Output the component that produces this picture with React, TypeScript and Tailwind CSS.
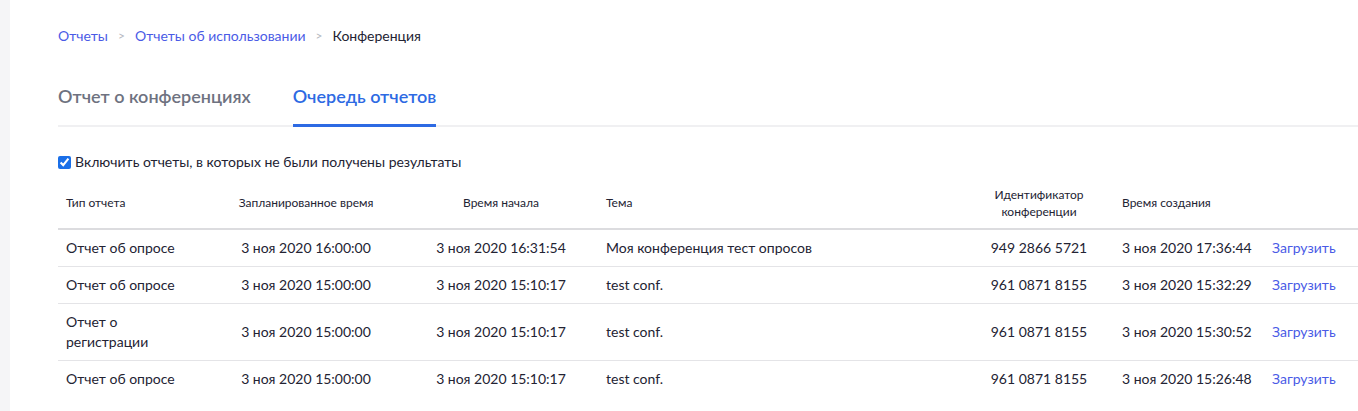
import { useState } from 'react';

interface ReportRow {
  type: string;
  scheduled: string;
  started: string;
  topic: string;
  meetingId: string;
  created: string;
}

const rows: ReportRow[] = [
  {
    type: 'Отчет об опросе',
    scheduled: '3 ноя 2020 16:00:00',
    started: '3 ноя 2020 16:31:54',
    topic: 'Моя конференция тест опросов',
    meetingId: '949 2866 5721',
    created: '3 ноя 2020 17:36:44',
  },
  {
    type: 'Отчет об опросе',
    scheduled: '3 ноя 2020 15:00:00',
    started: '3 ноя 2020 15:10:17',
    topic: 'test conf.',
    meetingId: '961 0871 8155',
    created: '3 ноя 2020 15:32:29',
  },
  {
    type: 'Отчет о регистрации',
    scheduled: '3 ноя 2020 15:00:00',
    started: '3 ноя 2020 15:10:17',
    topic: 'test conf.',
    meetingId: '961 0871 8155',
    created: '3 ноя 2020 15:30:52',
  },
  {
    type: 'Отчет об опросе',
    scheduled: '3 ноя 2020 15:00:00',
    started: '3 ноя 2020 15:10:17',
    topic: 'test conf.',
    meetingId: '961 0871 8155',
    created: '3 ноя 2020 15:26:48',
  },
];

export default function App() {
  const [activeTab, setActiveTab] = useState<'meetings' | 'queue'>('queue');
  const [includeEmpty, setIncludeEmpty] = useState(true);

  return (
    <div className="flex min-h-[411px] bg-white font-['Lato',sans-serif] text-[#232333]">
      <div className="w-[10px] shrink-0 bg-[#f5f5f7]" />

      <div className="flex-1 pl-[48px] pt-[26px] overflow-hidden">
        {/* breadcrumb */}
        <nav className="flex items-center text-[14px] leading-5">
          <a className="text-[#4a5be6]">Отчеты</a>
          <span className="mx-[10px] text-[#b5b8c0] text-[12px]">&gt;</span>
          <a className="text-[#4a5be6]">Отчеты об использовании</a>
          <span className="mx-[10px] text-[#b5b8c0] text-[12px]">&gt;</span>
          <span className="text-[#232333]">Конференция</span>
        </nav>

        {/* tabs */}
        <div className="mt-[38px] flex gap-[42px] border-b-2 border-[#f0f0f2]">
          <button
            onClick={() => setActiveTab('meetings')}
            className={`-mb-[2px] border-b-[3px] pb-[16px] text-[18px] leading-6 font-semibold ${
              activeTab === 'meetings' ? 'border-[#2d6ae3] text-[#2d6ae3]' : 'border-transparent text-[#6e7280]'
            }`}
          >
            Отчет о конференциях
          </button>
          <button
            onClick={() => setActiveTab('queue')}
            className={`-mb-[2px] border-b-[3px] pb-[16px] text-[18px] leading-6 font-semibold ${
              activeTab === 'queue' ? 'border-[#2d6ae3] text-[#2d6ae3]' : 'border-transparent text-[#6e7280]'
            }`}
          >
            Очередь отчетов
          </button>
        </div>

        {/* filter */}
        <label className="mt-[25px] flex items-center gap-[4px] text-[14px] leading-5 text-[#232333]">
          <input
            type="checkbox"
            checked={includeEmpty}
            onChange={(e) => setIncludeEmpty(e.target.checked)}
            className="m-0 h-[13px] w-[13px] accent-[#1a6fe8]"
          />
          Включить отчеты, в которых не были получены результаты
        </label>

        {/* table */}
        <table className="mt-[9px] w-[1300px] table-fixed border-collapse text-left">
          <colgroup>
            <col className="w-[126px]" />
            <col className="w-[244px]" />
            <col className="w-[146px]" />
            <col className="w-[390px]" />
            <col className="w-[150px]" />
            <col className="w-[150px]" />
            <col className="w-[94px]" />
          </colgroup>
          <thead>
            <tr className="text-[12px] leading-[17px] text-[#232333]">
              <th className="h-[48px] border-b-2 border-[#dcdcdf] px-2 pb-1 font-normal">Тип отчета</th>
              <th className="border-b-2 border-[#dcdcdf] px-2 pb-1 text-center font-normal">Запланированное время</th>
              <th className="border-b-2 border-[#dcdcdf] px-2 pb-1 text-center font-normal">Время начала</th>
              <th className="border-b-2 border-[#dcdcdf] pl-8 pb-1 font-normal">Тема</th>
              <th className="border-b-2 border-[#dcdcdf] px-2 pb-1 text-center font-normal">
                Идентификатор
                <br />
                конференции
              </th>
              <th className="border-b-2 border-[#dcdcdf] px-2 pb-1 font-normal">Время создания</th>
              <th className="border-b-2 border-[#dcdcdf] px-2 pb-1 font-normal" />
            </tr>
          </thead>
          <tbody className="text-[14px] leading-5 text-[#232333]">
            {rows.map((row, i) => {
              const line = i < rows.length - 1 ? 'border-b border-[#e4e4e7]' : '';
              return (
                <tr key={i}>
                  <td className={`${line} px-2 py-2`}>{row.type}</td>
                  <td className={`${line} px-2 py-2 text-center`}>{row.scheduled}</td>
                  <td className={`${line} px-2 py-2 text-center`}>{row.started}</td>
                  <td className={`${line} pl-8 py-2`}>{row.topic}</td>
                  <td className={`${line} px-2 py-2 text-center`}>{row.meetingId}</td>
                  <td className={`${line} px-2 py-2`}>{row.created}</td>
                  <td className={`${line} px-2 py-2`}>
                    <a className="text-[#4a5be6]">Загрузить</a>
                  </td>
                </tr>
              );
            })}
          </tbody>
        </table>
      </div>
    </div>
  );
}
